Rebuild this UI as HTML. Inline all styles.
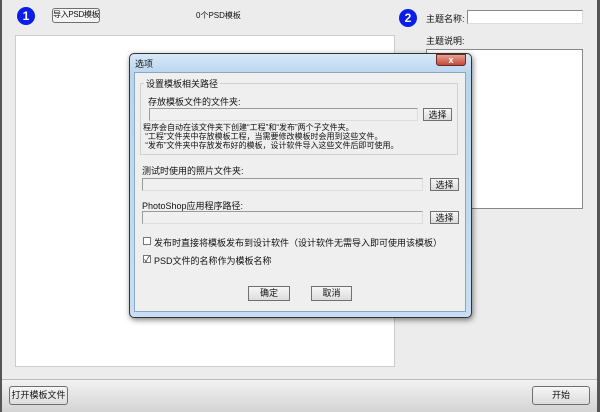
<!DOCTYPE html>
<html><head><meta charset="utf-8"><style>
*{margin:0;padding:0;box-sizing:border-box}
body{width:600px;height:412px;overflow:hidden;background:#ececec;font-family:"Liberation Sans","Noto Sans CJK SC",sans-serif;font-size:9px;color:#111;position:relative;white-space:nowrap}
.a{position:absolute}
.btn{position:absolute;border:1px solid #707070;border-radius:3px;background:linear-gradient(#f6f6f6,#dcdcdc);text-align:center;font-size:9px;line-height:12px;white-space:nowrap}
.inp{position:absolute;background:#f0f0f0;border:1px solid #9a9a9a;border-right-color:#ddd;border-bottom-color:#ddd}
.circ{position:absolute;width:18px;height:18px;border-radius:50%;background:#0a1ee8;color:#fff;font-weight:bold;font-size:12px;text-align:center;line-height:18px}
.cb{position:absolute;width:8px;height:8px;border:1px solid #777;background:#fff;font-size:8px;line-height:7px;text-align:center}
</style></head><body>
<div class="a" style="left:0;top:0;width:2px;height:412px;background:#555"></div>
<div class="a" style="right:0;top:0;width:3px;height:412px;background:#555"></div>
<div class="circ" style="left:17px;top:7px">1</div>
<div class="btn" style="left:52px;top:8px;width:48px;height:15px;background:#f4f4f4;font-size:8px;letter-spacing:-0.3px">导入PSD模板</div>
<div class="a" style="left:196px;top:10px;font-size:8px">0个PSD模板</div>
<div class="a" style="left:15px;top:35px;width:380px;height:332px;background:#fff;border:1px solid #ccc"></div>
<div class="circ" style="left:399px;top:9px">2</div>
<div class="a" style="left:426px;top:12px">主题名称:</div>
<div class="a" style="left:467px;top:10px;width:116px;height:14px;background:#fff;border:1px solid #888;border-right-color:#ddd;border-bottom-color:#ddd"></div>
<div class="a" style="left:426px;top:34px">主题说明:</div>
<div class="a" style="left:426px;top:49px;width:157px;height:160px;background:#fff;border:1px solid #888"></div>
<div class="a" style="left:2px;top:379px;width:595px;height:33px;background:linear-gradient(#f2f2f2,#d4d4d4);border-top:1px solid #bbb"></div>
<div class="btn" style="left:9px;top:386px;width:59px;height:19px;line-height:17px">打开模板文件</div>
<div class="btn" style="left:532px;top:386px;width:58px;height:19px;line-height:17px">开始</div>

<div class="a" style="left:129px;top:53px;width:343px;height:265px;border:1px solid #333;border-radius:5px;background:linear-gradient(#d6e8f8,#b9d5ee 20px,#c8def2);box-shadow:1px 2px 6px rgba(0,0,0,.5)"></div>
<div class="a" style="left:135px;top:57px">选项</div>
<div class="a" style="left:436px;top:54px;width:30px;height:12px;border:1px solid #6b2a24;border-radius:0 0 3px 3px;background:linear-gradient(#e8a394,#c4493a);color:#fff;font-weight:bold;text-align:center;line-height:10px;font-size:9px">x</div>
<div class="a" style="left:134px;top:72px;width:332px;height:240px;background:#efefef;border:1px solid #8aa8c4"></div>
<div class="a" style="left:140px;top:83px;width:318px;height:72px;border:1px solid #d0d0d0"></div>
<div class="a" style="left:144px;top:77px;background:#efefef;padding:0 2px">设置模板相关路径</div>
<div class="a" style="left:148px;top:95px">存放模板文件的文件夹:</div>
<div class="inp" style="left:149px;top:108px;width:269px;height:13px"></div>
<div class="btn" style="left:423px;top:108px;width:29px;height:13px;border-radius:0">选择</div>
<div class="a" style="left:143px;top:123px;line-height:9px;font-size:8px">程序会自动在该文件夹下创建“工程”和“发布”两个子文件夹。<br>&nbsp;“工程”文件夹中存放模板工程，当需要修改模板时会用到这些文件。<br>&nbsp;“发布”文件夹中存放发布好的模板，设计软件导入这些文件后即可使用。</div>
<div class="a" style="left:142px;top:164px">测试时使用的照片文件夹:</div>
<div class="inp" style="left:142px;top:178px;width:281px;height:13px"></div>
<div class="btn" style="left:430px;top:178px;width:29px;height:13px;border-radius:0">选择</div>
<div class="a" style="left:142px;top:199px">PhotoShop应用程序路径:</div>
<div class="inp" style="left:142px;top:211px;width:281px;height:13px"></div>
<div class="btn" style="left:430px;top:211px;width:29px;height:13px;border-radius:0">选择</div>
<div class="cb" style="left:143px;top:237px"></div>
<div class="a" style="left:154px;top:236px">发布时直接将模板发布到设计软件（设计软件无需导入即可使用该模板）</div>
<div class="cb" style="left:143px;top:255px">✓</div>
<div class="a" style="left:154px;top:254px">PSD文件的名称作为模板名称</div>
<div class="btn" style="left:248px;top:286px;width:42px;height:15px;border-radius:0">确定</div>
<div class="btn" style="left:311px;top:286px;width:41px;height:15px;border-radius:0">取消</div>
</body></html>
